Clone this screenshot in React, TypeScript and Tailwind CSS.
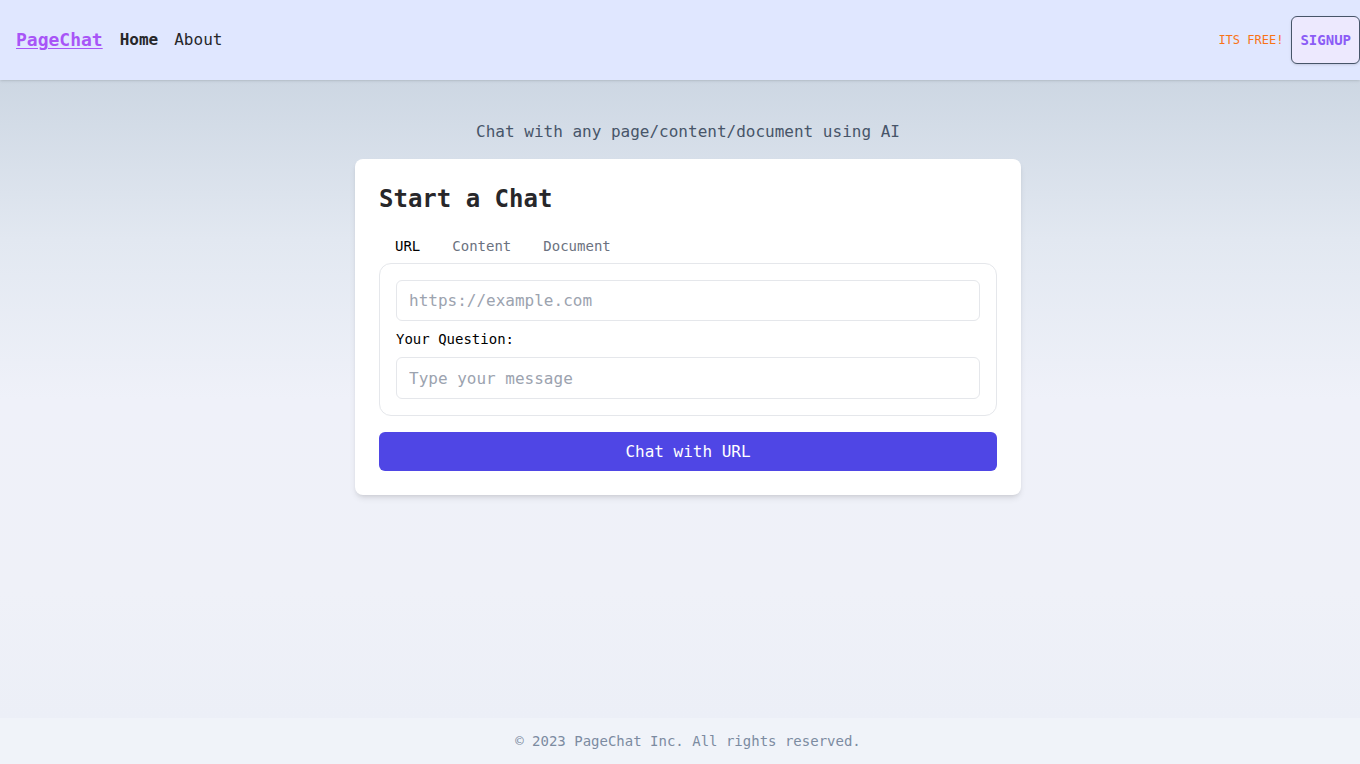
import { useState } from "react";
import clsx from "clsx";

const TABS = ["URL", "Content", "Document"];

export default function App() {
  const [tab, setTab] = useState("URL");

  return (
    <div className="flex min-h-screen flex-col bg-[#eef1f8] font-['DejaVu_Sans_Mono',monospace]">
      <header className="relative z-10 flex h-20 items-center justify-between bg-[#e0e7ff] pl-4 shadow-sm">
        <nav className="flex items-center gap-4">
          <a href="#" className="text-lg font-bold text-[#a855f7] underline underline-offset-2">
            PageChat
          </a>
          <a href="#" className="ml-px font-bold text-[#27272a]">
            Home
          </a>
          <a href="#" className="text-[#27272a]">
            About
          </a>
        </nav>
        <div className="flex items-center gap-2">
          <span className="text-xs font-medium text-[#f97316]">ITS FREE!</span>
          <button
            type="button"
            className="h-12 rounded-md border border-[#475569] bg-[#ede9fe] px-2 text-sm font-bold text-[#8b5cf6] shadow-sm"
          >
            SIGNUP
          </button>
        </div>
      </header>

      <main className="flex flex-1 flex-col items-center bg-[linear-gradient(180deg,#cdd7e3_0%,#e2e8f1_25%,#eff1f9_50%,#eff1f8_80%,#eceff7_100%)] pl-4 pt-10">
        <p className="mb-[15px] leading-6 text-[#475569]">Chat with any page/content/document using AI</p>
        <div className="w-[666px] rounded-lg bg-white p-6 shadow-md">
          <h1 className="text-2xl font-bold text-[#27272a]">Start a Chat</h1>
          <div className="mt-4 flex">
            {TABS.map((t) => (
              <button
                key={t}
                type="button"
                onClick={() => setTab(t)}
                className={clsx(
                  "px-4 pb-[7px] pt-[5px] text-sm",
                  tab === t ? "text-black" : "text-[#6b7280]"
                )}
              >
                {t}
              </button>
            ))}
          </div>
          <div className="rounded-xl border border-[#e5e7eb] p-4">
            <input
              placeholder={tab === "URL" ? "https://example.com" : tab === "Content" ? "Paste your content" : "Upload a document"}
              className="h-[41px] w-full rounded-md border border-[#e5e7eb] px-3 text-base text-[#111827] placeholder:text-[#9ca3af] focus:outline-none"
            />
            <label className="my-2 block text-sm text-black">Your Question:</label>
            <input
              placeholder="Type your message"
              className="h-[42px] w-full rounded-md border border-[#e5e7eb] px-3 text-base text-[#111827] placeholder:text-[#9ca3af] focus:outline-none"
            />
          </div>
          <button
            type="button"
            className="mt-4 h-[39px] w-full rounded-md bg-[#4f46e5] text-base text-white"
          >
            Chat with {tab}
          </button>
        </div>
      </main>

      <footer className="flex h-[46px] items-center justify-center bg-[#f0f3f9] pl-4 text-sm text-[#7c8ba1]">
        © 2023 PageChat Inc. All rights reserved.
      </footer>
    </div>
  );
}
